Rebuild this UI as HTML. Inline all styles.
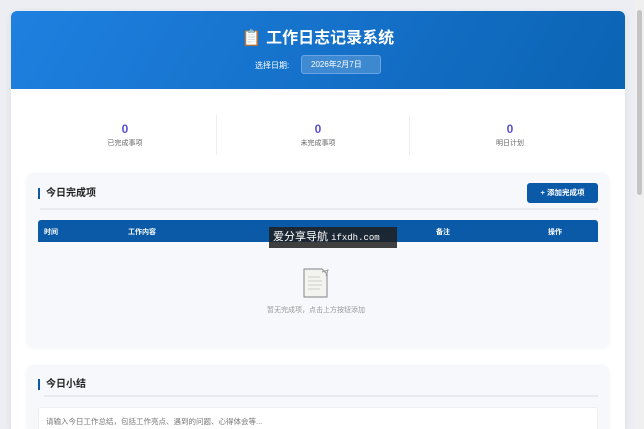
<!DOCTYPE html>
<html style="width:644px;height:429px;overflow:hidden"><head><meta charset="utf-8"><style>
*{margin:0;padding:0;box-sizing:border-box}
body{width:644px;height:429px;overflow:hidden;background:#eceef3;font-family:"Liberation Sans","Noto Sans CJK SC",sans-serif;position:relative}
.abs{position:absolute}
.sb{position:absolute;left:635px;top:0;width:9px;height:429px;background:#f0f0f0}
.sb div{position:absolute;left:2px;top:10px;width:5px;height:185px;background:#c4c4c4;border-radius:3px}
.wrap{position:absolute;left:11px;top:11px;width:614px;height:418px;background:#fff;border-radius:6px 6px 0 0;overflow:hidden;box-shadow:0 2px 8px rgba(0,0,0,.08)}
.hdr{height:78px;background:linear-gradient(120deg,#1f80e0,#0b63b3);color:#fff;text-align:center}
.hdr h1{position:absolute;left:0;right:0;top:18px;font-size:16px;font-weight:bold;line-height:20px}
.lbl{position:absolute;left:244px;top:49px;font-size:8px}
.date{position:absolute;left:290px;top:44px;width:80px;height:19px;border:1px solid #6aa6e6;background:rgba(255,255,255,.18);border-radius:3px;font-size:8px;line-height:17px;text-align:left;padding-left:9px}
.stat{position:absolute;top:110px;width:120px;text-align:center}
.stat b{display:block;color:#5a4fcf;font-size:12px;line-height:14px}
.stat span{display:block;font-size:7px;color:#666;margin-top:2px}
.card{position:absolute;left:27px;width:582px;background:#f7f8fc;border-radius:6px;box-shadow:0 1px 4px rgba(0,0,0,.05)}
.ttl{position:absolute;left:38px;font-size:10px;font-weight:bold;color:#222;border-left:2px solid #0a5aa8;padding-left:6px;line-height:11px}
.ln{position:absolute;left:40px;width:558px;height:2px;background:#e8eaf0}
</style></head><body>
<div class="wrap">
 <div class="hdr"><h1>📋 工作日志记录系统</h1><div class="lbl">选择日期:</div><div class="date">2026年2月7日</div></div>
</div>
<div class="abs" style="left:216px;top:115px;width:1px;height:40px;background:#eee"></div>
<div class="abs" style="left:409px;top:115px;width:1px;height:40px;background:#eee"></div>
<div class="stat" style="left:65px;top:122px"><b>0</b><span>已完成事项</span></div>
<div class="stat" style="left:258px;top:122px"><b>0</b><span>未完成事项</span></div>
<div class="stat" style="left:450px;top:122px"><b>0</b><span>明日计划</span></div>
<div class="card" style="top:173px;height:174px"></div>
<div class="ttl" style="top:188px">今日完成项</div>
<div class="abs" style="left:527px;top:183px;width:71px;height:20px;background:#0a5aa8;border-radius:3px;color:#fff;font-size:7.5px;font-weight:bold;line-height:20px;text-align:center">+ 添加完成项</div>
<div class="ln" style="top:208px"></div>
<div class="abs" style="left:38px;top:220px;width:560px;height:22px;background:#0a5aa8;border-radius:3px 3px 0 0;color:#fff;font-size:7px;font-weight:bold">
 <span class="abs" style="left:6px;top:7px">时间</span><span class="abs" style="left:90px;top:7px">工作内容</span><span class="abs" style="left:398px;top:7px">备注</span><span class="abs" style="left:510px;top:7px">操作</span></div>
<div class="abs" style="left:269px;top:227px;width:128px;height:21px;background:rgba(30,30,30,.85);color:#fff;font-size:11px;line-height:21px;padding-left:4px;white-space:nowrap">爱分享导航 <span style="font-family:'Liberation Mono',monospace;font-size:9px">ifxdh.com</span></div>
<svg class="abs" style="left:302px;top:268px" width="30" height="30" viewBox="0 0 30 30"><path d="M2 1h18l5 5v23H2z" fill="#f3f3f0" stroke="#999" stroke-width="1.2"/><path d="M6 9h12M6 13h14M6 17h14M6 21h12" stroke="#ccc"/><path d="M20 4l6-2-2 6" fill="none" stroke="#999"/></svg>
<div class="abs" style="left:216px;top:305px;width:200px;text-align:center;font-size:7px;color:#999">暂无完成项，点击上方按钮添加</div>
<div class="card" style="top:365px;height:64px;border-radius:6px 6px 0 0"></div>
<div class="ttl" style="top:379px">今日小结</div>
<div class="ln" style="top:395px;left:44px;width:554px"></div>
<div class="abs" style="left:38px;top:407px;width:560px;height:22px;background:#fff;border:1px solid #eceef2;border-bottom:none;border-radius:3px 3px 0 0;font-size:7.5px;color:#777;padding:8px 7px">请输入今日工作总结，包括工作亮点、遇到的问题、心得体会等...</div>
<div class="sb"><div></div></div>
</body></html>
